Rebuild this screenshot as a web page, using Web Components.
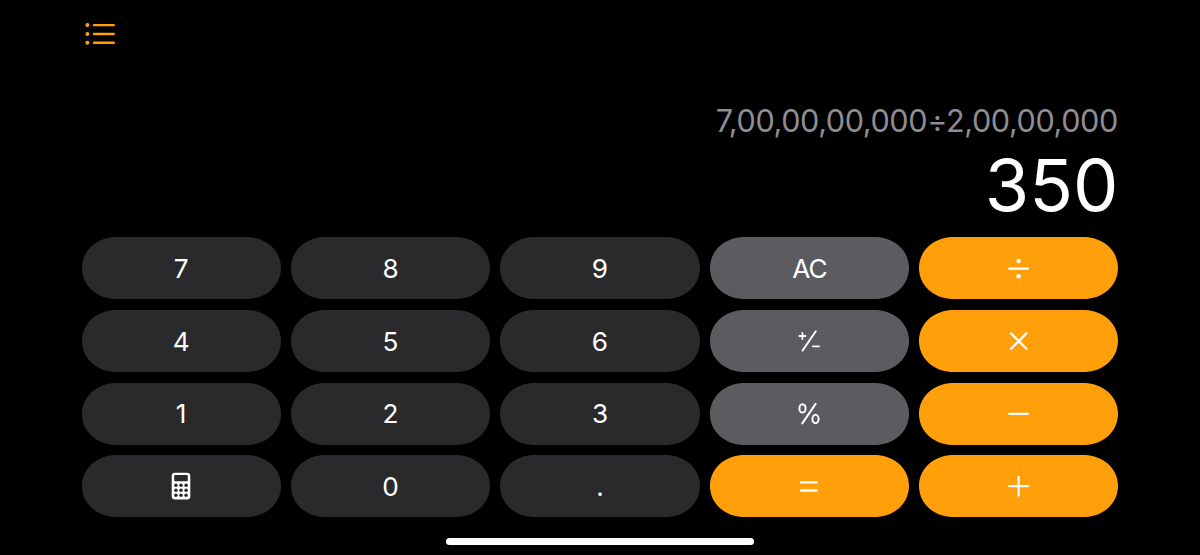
<!DOCTYPE html>
<html lang="en">
<head>
<meta charset="UTF-8">
<title>Calculator</title>
<style>
    html, body {
        margin: 0;
        height: 100%;
        background: #000;
        overflow: hidden;
    }
</style>
</head>
<body>
<calc-app></calc-app>

<script>
class CalcIcon extends HTMLElement {
    constructor() {
        super();
        this.attachShadow({ mode: 'open' });
    }

    connectedCallback() {
        const icon = CalcIcon.icons[this.getAttribute('name')];
        this.shadowRoot.innerHTML = `
            <style>
                :host {
                    display: block;
                    width: ${icon.width}px;
                    height: ${icon.height}px;
                }
                svg {
                    display: block;
                    fill: none;
                    stroke: currentColor;
                    stroke-width: 2.3;
                    stroke-linecap: round;
                }
                .solid { fill: currentColor; stroke: none; }
            </style>
            <svg width="${icon.width}" height="${icon.height}" viewBox="0 0 ${icon.width} ${icon.height}">${icon.body}</svg>
        `;
    }
}

// Operator icons share a 32x32 box so they centre the same way in a key
CalcIcon.icons = {
    list: {
        width: 32,
        height: 24,
        body: `
            <g class="solid"><circle cx="3.4" cy="3.1" r="2"/><circle cx="3.4" cy="12" r="2"/><circle cx="3.4" cy="20.8" r="2"/></g>
            <path stroke-width="2.4" d="M10 3.1H29.8M10 12H29.8M10 20.8H29.8"/>`
    },
    divide: {
        width: 32,
        height: 32,
        body: `
            <path d="M6.2 16.6H25"/>
            <g class="solid"><circle cx="15.6" cy="9.1" r="2.2"/><circle cx="15.6" cy="24.2" r="2.2"/></g>`
    },
    multiply: { width: 32, height: 32, body: '<path d="M8 8.4L23.4 23.8M23.4 8.4L8 23.8"/>' },
    minus: { width: 32, height: 32, body: '<path d="M6.2 15.9H25"/>' },
    plus: { width: 32, height: 32, body: '<path d="M6.2 16.2H25M15.6 6.8V25.6"/>' },
    equals: { width: 32, height: 32, body: '<path d="M8 12.4H23.8M8 20.5H23.8"/>' },
    sign: {
        width: 32,
        height: 32,
        body: `
            <path stroke-width="1.9" d="M9.5 25.6L22.8 6.2"/>
            <path stroke-width="1.8" d="M6.4 11H12.4M9.4 7.9V14M19.8 21.3H26"/>`
    },
    percent: {
        width: 32,
        height: 32,
        body: `
            <path stroke-width="2" d="M9.3 25.4L22.6 5.9"/>
            <g stroke-width="2"><ellipse cx="9.5" cy="10.4" rx="3.1" ry="4.2"/><ellipse cx="22.5" cy="21" rx="3.1" ry="4.2"/></g>`
    },
    calculator: {
        width: 20,
        height: 28,
        body: `
            <path class="solid" fill-rule="evenodd" d="M4 .7H16A3.3 3.3 0 0 1 19.3 4V24.2A3.3 3.3 0 0 1 16 27.5H4A3.3 3.3 0 0 1 .7 24.2V4A3.3 3.3 0 0 1 4 .7ZM4.2 3.1A1 1 0 0 0 3.2 4.1V8.2A1 1 0 0 0 4.2 9.2H15.8A1 1 0 0 0 16.8 8.2V4.1A1 1 0 0 0 15.8 3.1Z"/>
            <g style="fill: var(--key-color); stroke: none">
                <circle cx="4.9" cy="13.2" r="1.75"/><circle cx="10" cy="13.2" r="1.75"/><circle cx="15.1" cy="13.2" r="1.75"/>
                <circle cx="4.9" cy="18.3" r="1.75"/><circle cx="10" cy="18.3" r="1.75"/><circle cx="15.1" cy="18.3" r="1.75"/>
                <circle cx="4.9" cy="23.3" r="1.75"/><circle cx="10" cy="23.3" r="1.75"/><circle cx="15.1" cy="23.3" r="1.75"/>
            </g>`
    }
};

customElements.define('calc-icon', CalcIcon);

class CalcKey extends HTMLElement {
    constructor() {
        super();
        this.attachShadow({ mode: 'open' });
    }

    connectedCallback() {
        const color = this.getColor(this.getAttribute('kind'));
        this.shadowRoot.innerHTML = `
            <style>
                :host {
                    --key-color: ${color};
                    display: grid;
                }
                button {
                    display: flex;
                    justify-content: center;
                    align-items: center;
                    margin: 0;
                    padding: 1px 0 0;
                    border: 0;
                    border-radius: 35px / 31px;
                    corner-shape: superellipse(1.04);
                    background: var(--key-color);
                    color: #fff;
                    font: inherit;
                    line-height: 32px;
                    letter-spacing: inherit;
                }
                ::slotted(calc-icon) { margin-top: -1px; }
            </style>
            <button><slot></slot></button>
        `;
    }

    getColor(kind) {
        if (kind === 'operator') return '#ff9f0a';
        if (kind === 'function') return '#5c5b60';
        return '#2a2a2c';
    }
}

customElements.define('calc-key', CalcKey);

class CalcDisplay extends HTMLElement {
    constructor() {
        super();
        this.attachShadow({ mode: 'open' });
        this.shadowRoot.innerHTML = `
            <style>
                :host {
                    display: flex;
                    flex-direction: column;
                    align-items: flex-end;
                }
                .expression {
                    padding-right: 0.5px;
                    color: #8e8d93;
                    font-size: 30.6px;
                    line-height: 40px;
                    letter-spacing: -0.4px;
                }
                .result {
                    margin-top: 4px;
                    color: #fff;
                    font-size: 72px;
                    line-height: 80px;
                }
            </style>
            <div class="expression"><slot name="expression"></slot></div>
            <div class="result"><slot></slot></div>
        `;
    }
}

customElements.define('calc-display', CalcDisplay);

class CalcApp extends HTMLElement {
    constructor() {
        super();
        this.attachShadow({ mode: 'open' });
        this.shadowRoot.innerHTML = `
            <style>
                :host {
                    display: flex;
                    flex-direction: column;
                    box-sizing: border-box;
                    height: 555px;
                    padding: 22px 81.6px 10.5px;
                    font-family: Inter, "Liberation Sans", sans-serif;
                }
                header {
                    height: 24px;
                    padding-left: 2.4px;
                    color: #ff9f0a;
                }
                calc-display { margin-top: 55px; }
                .keys {
                    display: grid;
                    grid-template-columns: repeat(5, 1fr);
                    grid-template-rows: repeat(4, 62px);
                    gap: 10.6px 10.4px;
                    margin-top: 12.45px;
                    font-size: 26.2px;
                }
                .clear { letter-spacing: -0.9px; }
                .home {
                    align-self: center;
                    width: 308px;
                    height: 6.6px;
                    margin-top: auto;
                    border-radius: 4px;
                    background: #fff;
                }
            </style>
            <header><calc-icon name="list"></calc-icon></header>
            <calc-display><span slot="expression">7,00,00,00,000÷2,00,00,000</span>350</calc-display>
            <div class="keys">
                <calc-key>7</calc-key>
                <calc-key>8</calc-key>
                <calc-key>9</calc-key>
                <calc-key class="clear" kind="function">AC</calc-key>
                <calc-key kind="operator"><calc-icon name="divide"></calc-icon></calc-key>
                <calc-key>4</calc-key>
                <calc-key>5</calc-key>
                <calc-key>6</calc-key>
                <calc-key kind="function"><calc-icon name="sign"></calc-icon></calc-key>
                <calc-key kind="operator"><calc-icon name="multiply"></calc-icon></calc-key>
                <calc-key>1</calc-key>
                <calc-key>2</calc-key>
                <calc-key>3</calc-key>
                <calc-key kind="function"><calc-icon name="percent"></calc-icon></calc-key>
                <calc-key kind="operator"><calc-icon name="minus"></calc-icon></calc-key>
                <calc-key><calc-icon name="calculator"></calc-icon></calc-key>
                <calc-key>0</calc-key>
                <calc-key>.</calc-key>
                <calc-key kind="operator"><calc-icon name="equals"></calc-icon></calc-key>
                <calc-key kind="operator"><calc-icon name="plus"></calc-icon></calc-key>
            </div>
            <div class="home"></div>
        `;
    }
}

customElements.define('calc-app', CalcApp);
</script>
</body>
</html>
